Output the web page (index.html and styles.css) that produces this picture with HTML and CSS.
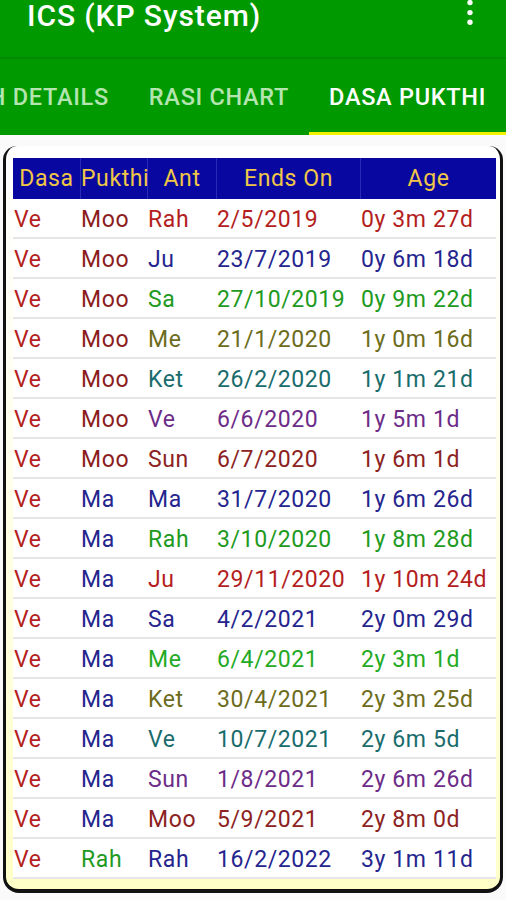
FILE: index.html
```html
<!DOCTYPE html>
<html>
<head>
    <title>ICS (KP System)</title>
    <link rel="stylesheet" href="styles.css">
</head>
<body>
    <header class="toolbar">
        <h1 class="title">ICS (KP System)</h1>
        <svg class="menu" width="8" height="26" viewBox="0 0 8 26">
            <circle cx="4" cy="2.6" r="2.7" fill="#fff"/>
            <circle cx="4" cy="12.6" r="2.7" fill="#fff"/>
            <circle cx="4" cy="22.2" r="2.7" fill="#fff"/>
        </svg>
    </header>
    <nav class="tabs">
        <div class="tab">BIRTH DETAILS</div>
        <div class="tab">RASI CHART</div>
        <div class="tab active">DASA PUKTHI</div>
    </nav>

    <main class="content">
        <div class="card">
            <table class="dasa-table">
                <colgroup>
                    <col style="width: 67px">
                    <col style="width: 67px">
                    <col style="width: 69px">
                    <col style="width: 144px">
                    <col>
                </colgroup>
                <thead>
                    <tr>
                        <th>Dasa</th>
                        <th>Pukthi</th>
                        <th>Ant</th>
                        <th>Ends On</th>
                        <th>Age</th>
                    </tr>
                </thead>
                <tbody>
                    <tr class="red"><td class="ve">Ve</td><td class="moo">Moo</td><td>Rah</td><td>2/5/2019</td><td>0y 3m 27d</td></tr>
                    <tr class="navy"><td class="ve">Ve</td><td class="moo">Moo</td><td>Ju</td><td>23/7/2019</td><td>0y 6m 18d</td></tr>
                    <tr class="green"><td class="ve">Ve</td><td class="moo">Moo</td><td>Sa</td><td>27/10/2019</td><td>0y 9m 22d</td></tr>
                    <tr class="olive"><td class="ve">Ve</td><td class="moo">Moo</td><td>Me</td><td>21/1/2020</td><td>1y 0m 16d</td></tr>
                    <tr class="teal"><td class="ve">Ve</td><td class="moo">Moo</td><td>Ket</td><td>26/2/2020</td><td>1y 1m 21d</td></tr>
                    <tr class="purple"><td class="ve">Ve</td><td class="moo">Moo</td><td>Ve</td><td>6/6/2020</td><td>1y 5m 1d</td></tr>
                    <tr class="maroon"><td class="ve">Ve</td><td class="moo">Moo</td><td>Sun</td><td>6/7/2020</td><td>1y 6m 1d</td></tr>
                    <tr class="navy"><td class="ve">Ve</td><td class="ma">Ma</td><td>Ma</td><td>31/7/2020</td><td>1y 6m 26d</td></tr>
                    <tr class="green"><td class="ve">Ve</td><td class="ma">Ma</td><td>Rah</td><td>3/10/2020</td><td>1y 8m 28d</td></tr>
                    <tr class="red"><td class="ve">Ve</td><td class="ma">Ma</td><td>Ju</td><td>29/11/2020</td><td>1y 10m 24d</td></tr>
                    <tr class="navy"><td class="ve">Ve</td><td class="ma">Ma</td><td>Sa</td><td>4/2/2021</td><td>2y 0m 29d</td></tr>
                    <tr class="lime"><td class="ve">Ve</td><td class="ma">Ma</td><td>Me</td><td>6/4/2021</td><td>2y 3m 1d</td></tr>
                    <tr class="olive"><td class="ve">Ve</td><td class="ma">Ma</td><td>Ket</td><td>30/4/2021</td><td>2y 3m 25d</td></tr>
                    <tr class="teal"><td class="ve">Ve</td><td class="ma">Ma</td><td>Ve</td><td>10/7/2021</td><td>2y 6m 5d</td></tr>
                    <tr class="purple"><td class="ve">Ve</td><td class="ma">Ma</td><td>Sun</td><td>1/8/2021</td><td>2y 6m 26d</td></tr>
                    <tr class="maroon"><td class="ve">Ve</td><td class="ma">Ma</td><td>Moo</td><td>5/9/2021</td><td>2y 8m 0d</td></tr>
                    <tr class="navy"><td class="ve">Ve</td><td class="rah">Rah</td><td>Rah</td><td>16/2/2022</td><td>3y 1m 11d</td></tr>
                </tbody>
            </table>
        </div>
    </main>
</body>
</html>
```

FILE: styles.css
```css
* {
    margin: 0;
    padding: 0;
    box-sizing: border-box;
}

body {
    background: #ececec;
    font-family: Roboto, "Liberation Sans", sans-serif;
    width: 506px;
    height: 900px;
    overflow: hidden;
}

/* toolbar */
.toolbar {
    height: 57px;
    background: #009a00;
    display: flex;
    justify-content: space-between;
    align-items: flex-start;
    padding: 0 32px 0 27px;
}

.toolbar .title {
    color: #fff;
    font-size: 30px;
    font-weight: 500;
    letter-spacing: 0.9px;
    line-height: 32px;
}

.toolbar .menu {
    display: block;
}

/* tabs */
.tabs {
    height: 78px;
    background: #009a00;
    border-top: 2px solid #008a00;
    display: flex;
    justify-content: flex-end;
    overflow: hidden;
    box-shadow: 0 2px 3px rgba(0, 0, 0, 0.15);
}

.tab {
    flex-shrink: 0;
    padding: 3px 20px 0;
    display: flex;
    align-items: center;
    color: #b4e4b0;
    font-size: 23.5px;
    font-weight: 500;
    letter-spacing: 0.7px;
    border-bottom: 3px solid transparent;
}

.tab.active {
    color: #fff;
    border-bottom-color: #f2f200;
}

/* content */
.content {
    background: #fafafa;
    padding: 11px 3px 7px;
}

.card {
    border: 3px solid #111;
    border-top: none;
    border-bottom-width: 4px;
    border-radius: 14px 14px 16px 16px;
    background: linear-gradient(#ffffff, #ffffee 40%, #ffffc8);
    padding: 12px 4px 10px 7px;
}

.dasa-table {
    width: 100%;
    table-layout: fixed;
    border-collapse: separate;
    border-spacing: 0;
    background: #fff;
    font-size: 23px;
    letter-spacing: 0.6px;
}

.dasa-table th {
    background: #0808a0;
    color: #f0c648;
    font-weight: 400;
    line-height: 40px;
    padding-top: 1px;
    text-align: center;
    white-space: nowrap;
    border-left: 1px solid #2a2ab4;
}

.dasa-table th:first-child {
    border-left: none;
}

.dasa-table td {
    line-height: 35px;
    padding: 3px 0 0 1px;
    white-space: nowrap;
    border-bottom: 2px solid #e6e6e6;
}

/* colours */
.red { color: #b41e1e; }
.navy { color: #25258e; }
.green { color: #1e9a1e; }
.lime { color: #24aa24; }
.olive { color: #6c6c1c; }
.teal { color: #1a6c6c; }
.purple { color: #6c2c88; }
.maroon { color: #8c2222; }

.dasa-table td.ve { color: #b41e1e; }
.dasa-table td.moo { color: #8c1c1c; }
.dasa-table td.ma { color: #25258e; }
.dasa-table td.rah { color: #1e9a1e; }
```
